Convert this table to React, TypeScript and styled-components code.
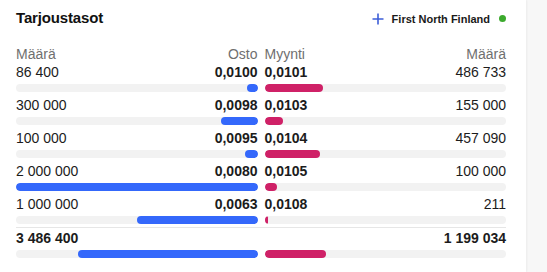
import React from "react";
import styled, { createGlobalStyle } from "styled-components";

const Global = createGlobalStyle`
  html, body { margin: 0; padding: 0; background: #f7f7f7; }
  body { font-family: "Liberation Sans", Arial, sans-serif; color: #1c1c1c; }
`;

const Card = styled.section`
  width: 526px;
  min-height: 272px;
  box-sizing: border-box;
  background: #ffffff;
  padding: 8px 20px 0 16px;
  box-shadow: 1px 0 2px rgba(0, 0, 0, 0.05);
`;

const TitleRow = styled.header`
  display: flex;
  align-items: center;
  justify-content: space-between;
  height: 20px;
`;

const Title = styled.h2`
  margin: 0;
  font-size: 15px;
  line-height: 20px;
  font-weight: 700;
  letter-spacing: -0.15px;
  color: #111;
`;

const Market = styled.div`
  display: flex;
  align-items: center;
  gap: 8px;
  font-size: 11px;
  font-weight: 700;
  color: #1a1a1a;
  padding-top: 1px;
`;

const Dot = styled.span`
  width: 7px;
  height: 7px;
  border-radius: 50%;
  background: #3caa2d;
  margin-left: 1px;
`;

const Table = styled.div`
  margin-top: 17px;
  display: flex;
  flex-direction: column;
`;

const Pair = styled.div<{ $gap?: number }>`
  display: grid;
  grid-template-columns: 1fr 1fr;
  column-gap: 7px;
  margin-bottom: ${(p) => p.$gap ?? 0}px;
`;

const Side = styled.div`
  display: flex;
  flex-direction: column;
`;

const Line = styled.div<{ $muted?: boolean }>`
  display: flex;
  justify-content: space-between;
  align-items: baseline;
  font-size: 14px;
  line-height: 18px;
  color: ${(p) => (p.$muted ? "#6f6f6f" : "#1c1c1c")};
`;

const Qty = styled.span<{ $bold?: boolean }>`
  font-weight: ${(p) => (p.$bold ? 700 : 400)};
`;

const Price = styled.span`
  font-weight: 700;
`;

const Track = styled.div<{ $side: "buy" | "sell" }>`
  margin-top: 3px;
  height: 8px;
  border-radius: 4px;
  background: #f2f2f2;
  display: flex;
  justify-content: ${(p) => (p.$side === "buy" ? "flex-end" : "flex-start")};
  overflow: hidden;
`;

const Fill = styled.div<{ $side: "buy" | "sell" }>`
  height: 100%;
  border-radius: 4px;
  background: ${(p) => (p.$side === "buy" ? "#3468fb" : "#cf2167")};
`;

const Divider = styled.hr`
  margin: 3px 0 1px;
  border: 0;
  height: 1px;
  background: #e6e6e6;
`;

const rows = [
  { bq: 86400, bp: "0,0100", sp: "0,0101", sq: 486733 },
  { bq: 300000, bp: "0,0098", sp: "0,0103", sq: 155000 },
  { bq: 100000, bp: "0,0095", sp: "0,0104", sq: 457090 },
  { bq: 2000000, bp: "0,0080", sp: "0,0105", sq: 100000 },
  { bq: 1000000, bp: "0,0063", sp: "0,0108", sq: 211 },
];

const fmt = (n: number) =>
  n.toString().replace(/\B(?=(\d{3})+(?!\d))/g, " ");

const width = (v: number, max: number) =>
  `max(${((v / max) * 100).toFixed(3)}%, 3px)`;

const PlusIcon = () => (
  <svg width="12" height="12" viewBox="0 0 12 12" aria-hidden>
    <path d="M6 0.5v11M0.5 6h11" stroke="#3d5ed8" strokeWidth="1.6" fill="none" />
  </svg>
);

export default function App() {
  const max = Math.max(...rows.flatMap((r) => [r.bq, r.sq]));
  const totalBuy = rows.reduce((s, r) => s + r.bq, 0);
  const totalSell = rows.reduce((s, r) => s + r.sq, 0);
  const totalMax = totalBuy + totalSell;

  return (
    <>
      <Global />
      <Card>
        <TitleRow>
          <Title>Tarjoustasot</Title>
          <Market>
            <PlusIcon />
            <span>First North Finland</span>
            <Dot />
          </Market>
        </TitleRow>
        <Table>
          <Pair>
            <Line $muted>
              <span>Määrä</span>
              <span>Osto</span>
            </Line>
            <Line $muted>
              <span>Myynti</span>
              <span>Määrä</span>
            </Line>
          </Pair>
          {rows.map((r, i) => (
            <Pair key={r.bp} $gap={i < rows.length - 1 ? 4 : 0}>
              <Side>
                <Line>
                  <Qty>{fmt(r.bq)}</Qty>
                  <Price>{r.bp}</Price>
                </Line>
                <Track $side="buy">
                  <Fill $side="buy" style={{ width: width(r.bq, max) }} />
                </Track>
              </Side>
              <Side>
                <Line>
                  <Price>{r.sp}</Price>
                  <Qty>{fmt(r.sq)}</Qty>
                </Line>
                <Track $side="sell">
                  <Fill $side="sell" style={{ width: width(r.sq, max) }} />
                </Track>
              </Side>
            </Pair>
          ))}
          <Divider />
          <Pair>
            <Side>
              <Line>
                <Qty $bold>{fmt(totalBuy)}</Qty>
              </Line>
              <Track $side="buy">
                <Fill $side="buy" style={{ width: width(totalBuy, totalMax) }} />
              </Track>
            </Side>
            <Side>
              <Line style={{ justifyContent: "flex-end" }}>
                <Qty $bold>{fmt(totalSell)}</Qty>
              </Line>
              <Track $side="sell">
                <Fill $side="sell" style={{ width: width(totalSell, totalMax) }} />
              </Track>
            </Side>
          </Pair>
        </Table>
      </Card>
    </>
  );
}
